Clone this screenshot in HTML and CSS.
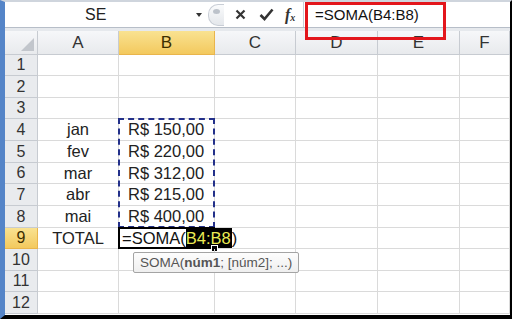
FILE: index.html
```html
<!DOCTYPE html>
<html lang="pt">
<head>
    <meta charset="UTF-8">
    <meta name="viewport" content="width=device-width, initial-scale=1.0">
    <title>SOMA</title>
    <link rel="stylesheet" href="styles.css">
</head>
<body>
    <div class="window">
        <div class="formula-bar">
            <div class="name-box">
                <span class="name">SE</span>
                <span class="caret"></span>
            </div>
            <div class="grip"><span></span></div>
            <div class="fb-buttons">
                <svg class="btn-x" width="11" height="11" viewBox="0 0 11 11"><path d="M1.5 1.5 L9.5 9.5 M9.5 1.5 L1.5 9.5" stroke="#333" stroke-width="2.2" fill="none"/></svg>
                <svg class="btn-ok" width="15" height="13" viewBox="0 0 15 13"><path d="M1.5 7 L5.5 11 L13.5 1.5" stroke="#333" stroke-width="2.6" fill="none"/></svg>
                <span class="fx">f<sub>x</sub></span>
            </div>
            <div class="formula">=SOMA(B4:B8)</div>
            <div class="callout"></div>
        </div>
        <div class="gap-strip"></div>

        <div class="sheet">
            <!-- header row -->
            <div class="corner"></div>
            <div class="col-head">A</div>
            <div class="col-head selected">B</div>
            <div class="col-head">C</div>
            <div class="col-head">D</div>
            <div class="col-head">E</div>
            <div class="col-head">F</div>

            <div class="row-head">1</div><div class="cell"></div><div class="cell"></div><div class="cell"></div><div class="cell"></div><div class="cell"></div><div class="cell"></div>
            <div class="row-head">2</div><div class="cell"></div><div class="cell"></div><div class="cell"></div><div class="cell"></div><div class="cell"></div><div class="cell"></div>
            <div class="row-head">3</div><div class="cell"></div><div class="cell"></div><div class="cell"></div><div class="cell"></div><div class="cell"></div><div class="cell"></div>
            <div class="row-head">4</div><div class="cell center">jan</div><div class="cell money">R$ 150,00<div class="marquee"></div></div><div class="cell"></div><div class="cell"></div><div class="cell"></div><div class="cell"></div>
            <div class="row-head">5</div><div class="cell center">fev</div><div class="cell money">R$ 220,00</div><div class="cell"></div><div class="cell"></div><div class="cell"></div><div class="cell"></div>
            <div class="row-head">6</div><div class="cell center">mar</div><div class="cell money">R$ 312,00</div><div class="cell"></div><div class="cell"></div><div class="cell"></div><div class="cell"></div>
            <div class="row-head">7</div><div class="cell center">abr</div><div class="cell money">R$ 215,00</div><div class="cell"></div><div class="cell"></div><div class="cell"></div><div class="cell"></div>
            <div class="row-head">8</div><div class="cell center">mai</div><div class="cell money">R$ 400,00</div><div class="cell"></div><div class="cell"></div><div class="cell"></div><div class="cell"></div>
            <div class="row-head selected">9</div><div class="cell center">TOTAL</div><div class="cell active"><span class="edit">=SOMA(<span class="ref">B4:B8</span>)</span></div><div class="cell"></div><div class="cell"></div><div class="cell"></div><div class="cell"></div>
            <div class="row-head">10</div><div class="cell"></div><div class="cell tip-anchor"><div class="fn-tip">SOMA(<b>núm1</b>; [núm2]; ...)</div></div><div class="cell"></div><div class="cell"></div><div class="cell"></div><div class="cell"></div>
            <div class="row-head">11</div><div class="cell"></div><div class="cell"></div><div class="cell"></div><div class="cell"></div><div class="cell"></div><div class="cell"></div>
            <div class="row-head">12</div><div class="cell"></div><div class="cell"></div><div class="cell"></div><div class="cell"></div><div class="cell"></div><div class="cell"></div>
        </div>
    </div>
</body>
</html>
```

FILE: styles.css
```css
body {
    margin: 0;
    padding: 0;
    background: #fff;
    overflow: hidden;
}

.window {
    width: 512px;
    height: 319px;
    box-sizing: border-box;
    border-top: 2px solid #cfd5dd;
    border-left: 5px solid #5585c8;
    border-right: 2px solid #000;
    border-bottom: 4px solid #000;
    display: flex;
    flex-direction: column;
    overflow: hidden;
    font-family: "Liberation Sans", Arial, sans-serif;
    color: #222;
}

/* Formula bar */
.formula-bar {
    position: relative;
    height: 26px;
    flex: none;
    display: flex;
    align-items: center;
    background: #fff;
    border-bottom: 1px solid #b7bec8;
    box-sizing: border-box;
}

.name-box {
    width: 200px;
    height: 100%;
    display: flex;
    align-items: center;
    box-sizing: border-box;
    padding-left: 80px;
}

.name-box .name {
    font-size: 16px;
    width: 100px;
}

.caret {
    width: 0;
    height: 0;
    border-left: 3px solid transparent;
    border-right: 3px solid transparent;
    border-top: 4px solid #333;
    margin-left: 11px;
}

.grip {
    width: 15px;
    height: 20px;
    margin-left: 3px;
    border: 1px solid #c9ced6;
    border-right: none;
    border-radius: 10px 0 0 10px;
    background: linear-gradient(#fafbfc, #e4e7eb);
    display: flex;
    align-items: center;
    justify-content: center;
}

.grip span {
    width: 7px;
    height: 5px;
    border-radius: 50%;
    background: #bcc2ca;
    margin-top: -6px;
}

.fb-buttons {
    display: flex;
    align-items: center;
    gap: 13px;
    padding-left: 11px;
    width: 80px;
    height: 100%;
    box-sizing: border-box;
    border-right: 1px solid #c9ced6;
}

.fx {
    font-family: "Liberation Serif", serif;
    font-style: italic;
    font-weight: bold;
    font-size: 16px;
    color: #333;
    margin-left: -2px;
}

.fx sub {
    font-size: 10px;
    vertical-align: -1px;
}

.formula {
    font-size: 15px;
    padding-left: 11px;
    color: #111;
}

/* red annotation box */
.callout {
    position: absolute;
    left: 300px;
    top: 0;
    width: 141px;
    height: 38px;
    box-sizing: border-box;
    border: 3px solid #e3161c;
    z-index: 5;
}

.gap-strip {
    height: 3px;
    flex: none;
    background: #e6e9ed;
}

/* Sheet grid */
.sheet {
    display: grid;
    grid-template-columns: 33px 81px 96px 81px 82px 82px 1fr;
    grid-template-rows: 24px 21px 22px 21px 22px 22px 21px 22px 22px 21px 22px 21px 22px;
    font-size: 16.5px;
}

.sheet > div {
    box-sizing: border-box;
}

.corner,
.col-head,
.row-head {
    background: linear-gradient(#f6f7f9, #e8eaed);
    border-right: 1px solid #c7cbd1;
    border-bottom: 1px solid #c7cbd1;
    color: #333;
    display: flex;
    align-items: center;
    justify-content: center;
}

.col-head {
    font-size: 17px;
}

.corner {
    position: relative;
}

.corner::after {
    content: "";
    position: absolute;
    right: 3px;
    bottom: 3px;
    border-left: 13px solid transparent;
    border-bottom: 13px solid #c2c6cc;
}

.row-head {
    font-size: 16px;
    background: #e9ebee;
}

.col-head.selected,
.row-head.selected {
    background: linear-gradient(#f9e291, #f3c95e);
    border-color: #e9b54c;
    color: #3d2e00;
}

.cell {
    border-right: 1px solid #dadada;
    border-bottom: 1px solid #dadada;
    display: flex;
    align-items: center;
    white-space: nowrap;
}

.cell.center {
    justify-content: center;
}

.cell.money {
    padding-left: 9px;
    position: relative;
}

/* copy marquee around B4:B8 */
.marquee {
    position: absolute;
    left: -1px;
    top: -1px;
    width: 97px;
    height: 110px;
    box-sizing: border-box;
    border: 2px dashed #23308a;
    z-index: 2;
}

.cell.active {
    position: relative;
    z-index: 3;
    overflow: visible;
    padding-left: 3px;
}

.cell.active::after {
    content: "";
    position: absolute;
    left: -1px;
    top: -1px;
    right: -1px;
    bottom: -1px;
    border: 2px solid #000;
}

.cell.active::before {
    content: "";
    position: absolute;
    right: -4px;
    bottom: -4px;
    width: 5px;
    height: 5px;
    background: #000;
    border: 1px solid #fff;
    z-index: 2;
}

.edit {
    position: relative;
    z-index: 1;
    color: #111;
    line-height: 20px;
}

.edit .ref {
    background: #000;
    color: #ecec55;
    display: inline-block;
    line-height: 20px;
    padding-right: 1px;
}

/* function tooltip */
.tip-anchor {
    position: relative;
    z-index: 4;
}

.fn-tip {
    position: absolute;
    left: 14px;
    top: 3px;
    height: 19px;
    padding: 0 6px;
    display: flex;
    align-items: center;
    font-size: 13.5px;
    color: #555;
    background: linear-gradient(#fdfdfd, #efefef);
    border: 1px solid #a4a4a4;
    border-radius: 2px;
}
```
